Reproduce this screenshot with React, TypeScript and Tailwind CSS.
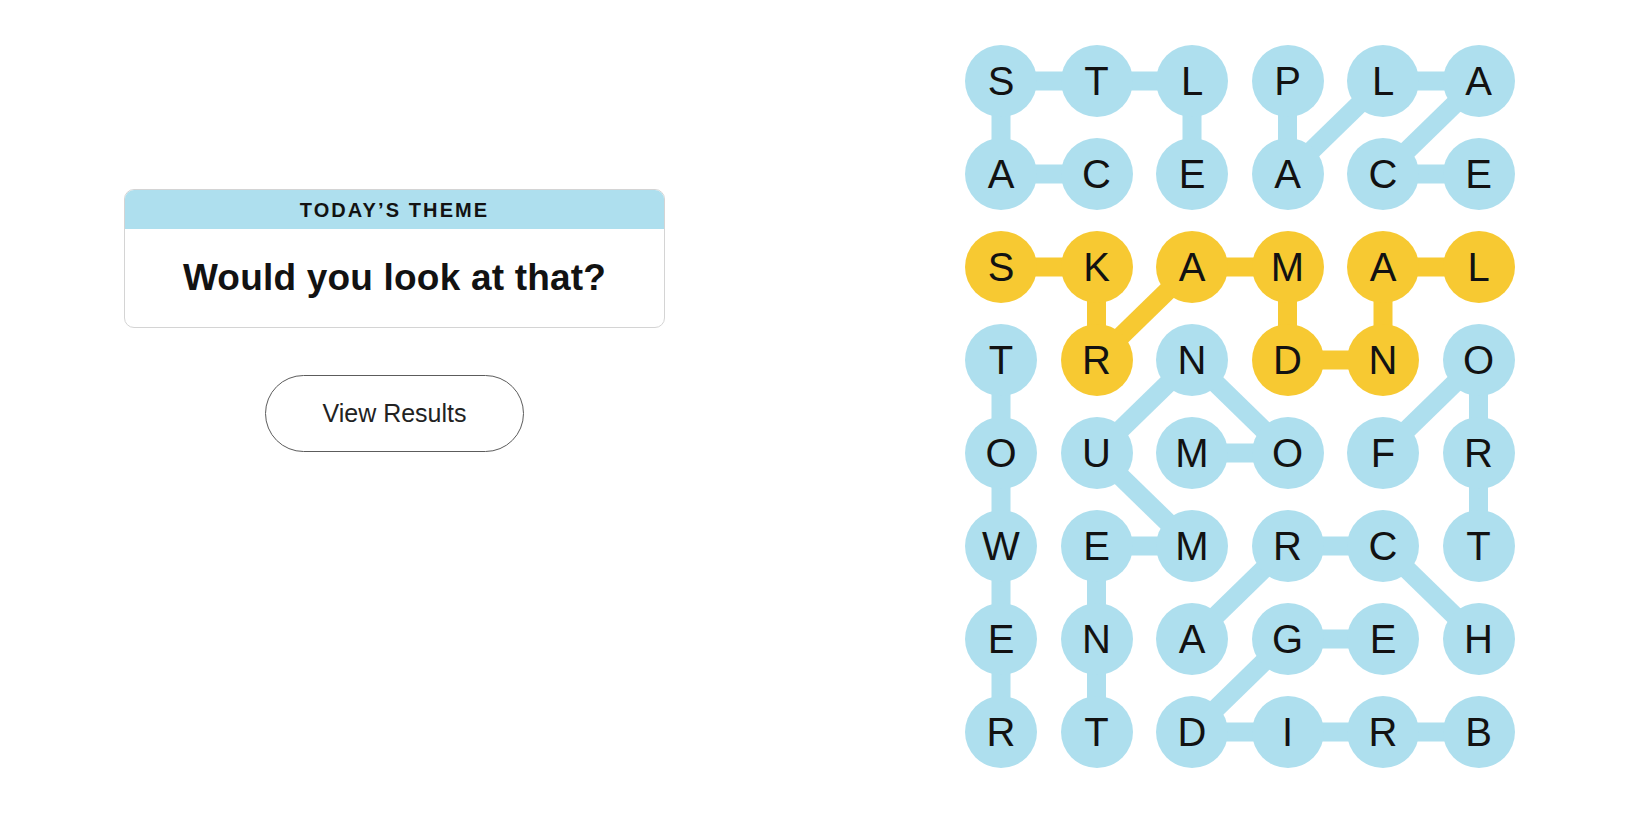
import React from 'react';

const ROWS = ['STLPLA', 'ACEACE', 'SKAMAL', 'TRNDNO', 'OUMOFR', 'WEMRCT', 'ENAGEH', 'RTDIRB'];

const SPANGRAM = new Set(['2,0', '2,1', '2,2', '2,3', '2,4', '2,5', '3,1', '3,3', '3,4']);

// found words, each as a path of [row, col] cells
const WORDS: { path: [number, number][]; spangram?: boolean }[] = [
  { path: [[1, 1], [1, 0], [0, 0], [0, 1], [0, 2], [1, 2]] }, // castle
  { path: [[0, 3], [1, 3], [0, 4], [0, 5], [1, 4], [1, 5]] }, // palace
  { path: [[3, 0], [4, 0], [5, 0], [6, 0], [7, 0]] }, // tower
  { path: [[4, 2], [4, 3], [3, 2], [4, 1], [5, 2], [5, 1], [6, 1], [7, 1]] }, // monument
  { path: [[7, 5], [7, 4], [7, 3], [7, 2], [6, 3], [6, 4]] }, // bridge
  { path: [[6, 2], [5, 3], [5, 4], [6, 5]] }, // arch
  { path: [[4, 4], [3, 5], [4, 5], [5, 5]] }, // fort
  { path: [[2, 5], [2, 4], [3, 4], [3, 3], [2, 3], [2, 2], [3, 1], [2, 1], [2, 0]], spangram: true },
];

const CELL = 72;
const GAP_X = 23.5;
const GAP_Y = 21;
const W = 6 * CELL + 5 * GAP_X;
const H = 8 * CELL + 7 * GAP_Y;

const cx = (c: number) => CELL / 2 + c * (CELL + GAP_X);
const cy = (r: number) => CELL / 2 + r * (CELL + GAP_Y);

function Connectors() {
  return (
    <svg className="absolute inset-0" width={W} height={H} viewBox={`0 0 ${W} ${H}`}>
      {WORDS.map((word, i) =>
        word.path.slice(1).map(([r, c], j) => {
          const [pr, pc] = word.path[j];
          return (
            <line
              key={`${i}-${j}`}
              x1={cx(pc)}
              y1={cy(pr)}
              x2={cx(c)}
              y2={cy(r)}
              stroke={word.spangram ? '#f7c932' : '#aedfee'}
              strokeWidth={19}
            />
          );
        })
      )}
    </svg>
  );
}

function LetterGrid() {
  return (
    <div className="relative" style={{ width: W, height: H }}>
      <Connectors />
      <div className="relative grid grid-cols-[repeat(6,72px)] gap-x-[23.5px] gap-y-[21px]">
        {ROWS.map((row, r) =>
          row.split('').map((letter, c) => (
            <button
              key={`${r}-${c}`}
              className={`w-[72px] h-[72px] rounded-full flex items-center justify-center text-[40px] leading-none text-[#121212] ${
                SPANGRAM.has(`${r},${c}`) ? 'bg-[#f7c932]' : 'bg-[#aedfee]'
              }`}
              style={{ fontFamily: '"Liberation Sans", Arial, sans-serif' }}
            >
              {letter}
            </button>
          ))
        )}
      </div>
    </div>
  );
}

export default function App() {
  return (
    <div className="min-h-screen bg-white flex font-['Liberation_Sans',Arial,sans-serif] text-[#121212]">
      <div className="w-[541px] ml-[124px] pt-[189px] flex flex-col items-center">
        <div className="w-full border border-[#d4d4d4] rounded-[10px] overflow-hidden">
          <div className="h-[39px] bg-[#aedfee] flex items-center justify-center">
            <span className="text-[20px] font-bold tracking-[2.1px] leading-none">TODAY’S THEME</span>
          </div>
          <div className="h-[98px] flex items-center justify-center pb-[2px]">
            <h1 className="text-[37px] font-bold leading-none tracking-[0.2px]">Would you look at that?</h1>
          </div>
        </div>
        <button className="mt-[47px] w-[259px] h-[77px] rounded-full border border-[#5c5c5c] text-[25px] text-[#222] bg-white">
          View Results
        </button>
      </div>
      <div className="ml-[300px] pt-[45px]">
        <LetterGrid />
      </div>
    </div>
  );
}
